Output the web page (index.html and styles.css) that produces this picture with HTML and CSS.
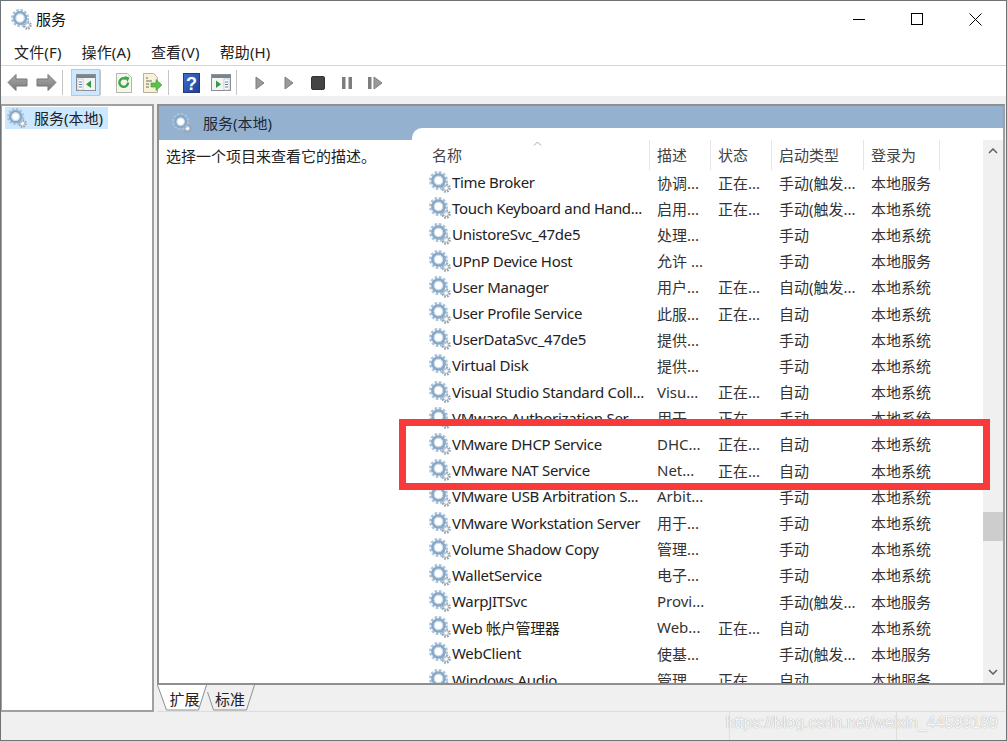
FILE: index.html
```html
<!DOCTYPE html>
<html lang="zh-CN">
<head>
    <meta charset="UTF-8">
    <title>服务</title>
    <link rel="stylesheet" href="styles.css">
</head>
<body>

    <!-- shared icons -->
    <svg class="defs" width="0" height="0">
        <defs>
            <linearGradient id="help-fill" x1="0" y1="0" x2="1" y2="1">
                <stop offset="0" stop-color="#3f6fd0"/>
                <stop offset="1" stop-color="#1f3f92"/>
            </linearGradient>
            <linearGradient id="arrow-fill" x1="0" y1="0" x2="0" y2="1">
                <stop offset="0" stop-color="#a8a8a8"/>
                <stop offset="1" stop-color="#7c7c7c"/>
            </linearGradient>
            <symbol id="gear" viewBox="0 0 22 22">
                <circle cx="17" cy="17" r="3.6" fill="none" stroke="#98a5b2" stroke-width="2.4" stroke-dasharray="1.7 1.1"/>
                <circle cx="17" cy="17" r="2.4" fill="#fff" stroke="#a6b2bd" stroke-width="1"/>
                <circle cx="9.5" cy="9.5" r="8" fill="none" stroke="#a9c4dc" stroke-width="3" stroke-dasharray="2.6 1.6"/>
                <circle cx="9.5" cy="9.5" r="6" fill="none" stroke="#88a8c6" stroke-width="2.6"/>
                <circle cx="9.5" cy="9.5" r="4.2" fill="#fff" stroke="#c4d8e8" stroke-width="1"/>
            </symbol>
        </defs>
    </svg>

    <div class="window">

        <header class="titlebar">
            <svg class="title-gear"><use href="#gear"/></svg>
            <span class="title-text">服务</span>
            <div class="caption">
                <svg width="13" height="13" viewBox="0 0 13 13"><path d="M0 6.500h12" stroke="#000" fill="none"/></svg>
                <svg width="13" height="13" viewBox="0 0 13 13"><rect x=".5" y=".5" width="11" height="11" stroke="#000" fill="none"/></svg>
                <svg width="13" height="13" viewBox="0 0 13 13"><path d="M.5 .5l12 12M12.500 .5l-12 12" stroke="#000" fill="none"/></svg>
            </div>
        </header>

        <nav class="menubar">
            <a href="#">文件(F)</a>
            <a href="#">操作(A)</a>
            <a href="#">查看(V)</a>
            <a href="#">帮助(H)</a>
        </nav>

        <div class="toolbar">
            <button class="tool">
                <svg width="21" height="19" viewBox="0 0 21 19"><path d="M1 9.500l8-8V6h11v7H9v4.500z" fill="url(#arrow-fill)" stroke="#777"/></svg>
            </button>
            <button class="tool">
                <svg width="21" height="19" viewBox="0 0 21 19"><path d="M20 9.500l-8-8V6H1v7h11v4.500z" fill="url(#arrow-fill)" stroke="#777"/></svg>
            </button>
            <span class="sep"></span>
            <button class="tool active">
                <svg width="20" height="17" viewBox="0 0 20 17">
                    <rect x=".5" y=".5" width="19" height="16" fill="#f4f4f4" stroke="#8a8f94"/>
                    <rect x="1" y="1" width="18" height="3" fill="#78848f"/>
                    <rect x="2" y="5" width="5" height="11" fill="#fff" stroke="#aab2ba" stroke-width=".6"/>
                    <path d="M3 8h3M3 10.500h3M3 13h3" stroke="#5a86b0"/>
                    <path d="M15 6.500v7.500l-5-3.750z" fill="#2f9e3f"/>
                </svg>
            </button>
            <span class="sep sep-wide"></span>
            <button class="tool">
                <svg width="16" height="20" viewBox="0 0 16 20">
                    <path d="M.5.5h11l4 4v15H.5z" fill="#f5f5ee" stroke="#b5b5a8"/>
                    <path d="M12 9.500a4.300 4.300 0 1 1-2-3.600" fill="none" stroke="#3aa648" stroke-width="2.400"/>
                    <path d="M8.500 3l5 1.500-2 4.500z" fill="#3aa648"/>
                </svg>
            </button>
            <button class="tool">
                <svg width="20" height="20" viewBox="0 0 20 20">
                    <path d="M.5.5h10l4 4v15H.5z" fill="#f7f1d8" stroke="#b9b296"/>
                    <path d="M3 5h2M3 8h6M3 11h3M3 14h3" stroke="#6b6b60"/>
                    <path d="M8 10h5V6.500l6 5.500-6 5.500V14H8z" fill="#5cc04a" stroke="#3c9a33" stroke-width=".6"/>
                </svg>
            </button>
            <span class="sep"></span>
            <button class="tool">
                <svg width="17" height="20" viewBox="0 0 17 20">
                    <rect x=".5" y=".5" width="16" height="19" fill="url(#help-fill)" stroke="#1d3a82"/>
                    <text x="8.500" y="16.500" class="help-mark">?</text>
                </svg>
            </button>
            <button class="tool">
                <svg width="20" height="17" viewBox="0 0 20 17">
                    <rect x=".5" y=".5" width="19" height="16" fill="#f4f4f4" stroke="#8a8f94"/>
                    <rect x="1" y="1" width="18" height="3" fill="#78848f"/>
                    <rect x="13" y="5" width="5" height="11" fill="#fff" stroke="#aab2ba" stroke-width=".6"/>
                    <path d="M14 8h3M14 10.500h3M14 13h3" stroke="#5a86b0"/>
                    <path d="M5 6.500v7.500l5-3.750z" fill="#2f9e3f"/>
                </svg>
            </button>
            <span class="sep"></span>
            <button class="tool">
                <svg width="10" height="14" viewBox="0 0 10 14"><path d="M1 1l8 6-8 6z" fill="#9a9a9a" stroke="#7d7d7d"/></svg>
            </button>
            <button class="tool">
                <svg width="10" height="14" viewBox="0 0 10 14"><path d="M1 1l8 6-8 6z" fill="#9a9a9a" stroke="#7d7d7d"/></svg>
            </button>
            <button class="tool">
                <svg width="14" height="14" viewBox="0 0 14 14"><rect x=".5" y=".5" width="13" height="13" rx="1.500" fill="#444" stroke="#333"/></svg>
            </button>
            <button class="tool">
                <svg width="10" height="14" viewBox="0 0 10 14"><path d="M0 1h3.500v12H0zM6.500 1H10v12H6.500z" fill="#7d7d7d"/></svg>
            </button>
            <button class="tool">
                <svg width="15" height="14" viewBox="0 0 15 14"><path d="M0 1h3.500v12H0z" fill="#7d7d7d"/><path d="M6 1l8 6-8 6z" fill="#9a9a9a" stroke="#7d7d7d"/></svg>
            </button>
        </div>

        <div class="band"></div>

        <main class="main">

            <aside class="tree">
                <div class="tree-item">
                    <svg class="tree-gear"><use href="#gear"/></svg>
                    <span>服务(本地)</span>
                </div>
            </aside>

            <div class="content">
                <section class="pane">
                    <div class="desc">
                        <div class="pane-title">
                            <svg class="tree-gear"><use href="#gear"/></svg>
                            <span>服务(本地)</span>
                        </div>
                        <p class="desc-text">选择一个项目来查看它的描述。</p>
                    </div>

                    <div class="list">
                        <div class="table">
                            <div class="row head">
                                <div class="cell name-head">名称</div>
                                <div class="cell">描述</div>
                                <div class="cell">状态</div>
                                <div class="cell">启动类型</div>
                                <div class="cell">登录为</div>
                            </div>
                            <svg class="sort-caret" width="9" height="5" viewBox="0 0 9 5"><path d="M1 4.500l3.500-3.500 3.500 3.500" fill="none" stroke="#a8a8a8"/></svg>
                            <div class="rows">
                                <div class="row"><div class="cell name"><svg class="gear"><use href="#gear"/></svg>Time Broker</div><div class="cell">协调...</div><div class="cell">正在...</div><div class="cell">手动(触发...</div><div class="cell">本地服务</div></div>
                                <div class="row"><div class="cell name"><svg class="gear"><use href="#gear"/></svg>Touch Keyboard and Hand...</div><div class="cell">启用...</div><div class="cell">正在...</div><div class="cell">手动(触发...</div><div class="cell">本地系统</div></div>
                                <div class="row"><div class="cell name"><svg class="gear"><use href="#gear"/></svg>UnistoreSvc_47de5</div><div class="cell">处理...</div><div class="cell"></div><div class="cell">手动</div><div class="cell">本地系统</div></div>
                                <div class="row"><div class="cell name"><svg class="gear"><use href="#gear"/></svg>UPnP Device Host</div><div class="cell">允许 ...</div><div class="cell"></div><div class="cell">手动</div><div class="cell">本地服务</div></div>
                                <div class="row"><div class="cell name"><svg class="gear"><use href="#gear"/></svg>User Manager</div><div class="cell">用户...</div><div class="cell">正在...</div><div class="cell">自动(触发...</div><div class="cell">本地系统</div></div>
                                <div class="row"><div class="cell name"><svg class="gear"><use href="#gear"/></svg>User Profile Service</div><div class="cell">此服...</div><div class="cell">正在...</div><div class="cell">自动</div><div class="cell">本地系统</div></div>
                                <div class="row"><div class="cell name"><svg class="gear"><use href="#gear"/></svg>UserDataSvc_47de5</div><div class="cell">提供...</div><div class="cell"></div><div class="cell">手动</div><div class="cell">本地系统</div></div>
                                <div class="row"><div class="cell name"><svg class="gear"><use href="#gear"/></svg>Virtual Disk</div><div class="cell">提供...</div><div class="cell"></div><div class="cell">手动</div><div class="cell">本地系统</div></div>
                                <div class="row"><div class="cell name"><svg class="gear"><use href="#gear"/></svg>Visual Studio Standard Coll...</div><div class="cell">Visu...</div><div class="cell">正在...</div><div class="cell">自动</div><div class="cell">本地系统</div></div>
                                <div class="row"><div class="cell name"><svg class="gear"><use href="#gear"/></svg>VMware Authorization Ser...</div><div class="cell">用于...</div><div class="cell">正在...</div><div class="cell">手动</div><div class="cell">本地系统</div></div>
                                <div class="row"><div class="cell name"><svg class="gear"><use href="#gear"/></svg>VMware DHCP Service</div><div class="cell">DHC...</div><div class="cell">正在...</div><div class="cell">自动</div><div class="cell">本地系统</div></div>
                                <div class="row"><div class="cell name"><svg class="gear"><use href="#gear"/></svg>VMware NAT Service</div><div class="cell">Net...</div><div class="cell">正在...</div><div class="cell">自动</div><div class="cell">本地系统</div></div>
                                <div class="row"><div class="cell name"><svg class="gear"><use href="#gear"/></svg>VMware USB Arbitration S...</div><div class="cell">Arbit...</div><div class="cell"></div><div class="cell">手动</div><div class="cell">本地系统</div></div>
                                <div class="row"><div class="cell name"><svg class="gear"><use href="#gear"/></svg>VMware Workstation Server</div><div class="cell">用于...</div><div class="cell"></div><div class="cell">手动</div><div class="cell">本地系统</div></div>
                                <div class="row"><div class="cell name"><svg class="gear"><use href="#gear"/></svg>Volume Shadow Copy</div><div class="cell">管理...</div><div class="cell"></div><div class="cell">手动</div><div class="cell">本地系统</div></div>
                                <div class="row"><div class="cell name"><svg class="gear"><use href="#gear"/></svg>WalletService</div><div class="cell">电子...</div><div class="cell"></div><div class="cell">手动</div><div class="cell">本地系统</div></div>
                                <div class="row"><div class="cell name"><svg class="gear"><use href="#gear"/></svg>WarpJITSvc</div><div class="cell">Provi...</div><div class="cell"></div><div class="cell">手动(触发...</div><div class="cell">本地服务</div></div>
                                <div class="row"><div class="cell name"><svg class="gear"><use href="#gear"/></svg>Web 帐户管理器</div><div class="cell">Web...</div><div class="cell">正在...</div><div class="cell">自动</div><div class="cell">本地系统</div></div>
                                <div class="row"><div class="cell name"><svg class="gear"><use href="#gear"/></svg>WebClient</div><div class="cell">使基...</div><div class="cell"></div><div class="cell">手动(触发...</div><div class="cell">本地服务</div></div>
                                <div class="row"><div class="cell name"><svg class="gear"><use href="#gear"/></svg>Windows Audio</div><div class="cell">管理...</div><div class="cell">正在...</div><div class="cell">自动</div><div class="cell">本地服务</div></div>
                            </div>
                        </div>

                        <div class="scrollbar">
                            <svg class="arrow" width="10" height="6" viewBox="0 0 10 6"><path d="M1 5l4-4 4 4" fill="none" stroke="#606060" stroke-width="1.500"/></svg>
                            <div class="track"><div class="thumb"></div></div>
                            <svg class="arrow" width="10" height="6" viewBox="0 0 10 6"><path d="M1 1l4 4 4-4" fill="none" stroke="#606060" stroke-width="1.500"/></svg>
                        </div>
                    </div>

                    <div class="highlight"></div>
                </section>

                <div class="tabs">
                    <div class="tab tab-on">
                        <svg class="tab-shape" width="51" height="26" viewBox="0 0 51 26"><path d="M.5 0l9 25h32l8-25" fill="#fff" stroke="#8f8f8f"/></svg>
                        <span>扩展</span>
                    </div>
                    <div class="tab">
                        <svg class="tab-shape" width="49" height="26" viewBox="0 0 49 26"><path d="M.5 7l6 18h33l8-25" fill="#f0f0f0" stroke="#8f8f8f"/></svg>
                        <span>标准</span>
                    </div>
                </div>
            </div>

        </main>

        <footer class="statusbar">
            <span class="status-cell"></span>
            <span class="status-cell status-mid"></span>
            <span class="status-cell status-end"></span>
            <span class="watermark">https://blog.csdn.net/weixin_44599189</span>
        </footer>

    </div>

</body>
</html>
```

FILE: styles.css
```css
* {
    box-sizing: border-box;
}
body {
    margin: 0;
    font-family: "Noto Sans", "Noto Sans CJK SC", sans-serif;
    font-size: 15px;
    color: #222;
    background-color: #fff;
}
.defs {
    position: absolute;
}
.window {
    width: 1007px;
    height: 741px;
    border: 1px solid #6f7376;
    display: flex;
    flex-direction: column;
    overflow: hidden;
}

/* title bar */
.titlebar {
    height: 37px;
    display: flex;
    align-items: center;
    padding-left: 10px;
    flex: none;
}
.title-gear {
    width: 21px;
    height: 21px;
    margin-right: 4px;
}
.title-text {
    color: #111;
    margin-bottom: 2px;
}
.caption {
    margin-left: auto;
    display: flex;
    gap: 45px;
    padding-right: 24px;
}

/* menu */
.menubar {
    height: 28px;
    display: flex;
    align-items: center;
    padding-left: 13px;
    gap: 20px;
    flex: none;
    letter-spacing: .15px;
    border-bottom: 1px solid #d4d4d4;
}
.menubar a {
    color: #222;
    text-decoration: none;
}

/* toolbar */
.toolbar {
    height: 30px;
    display: flex;
    align-items: center;
    padding: 3px 0 0 2px;
    flex: none;
}
.tool {
    width: 29px;
    height: 27px;
    padding: 0;
    border: 1px solid transparent;
    background: none;
    display: flex;
    align-items: center;
    justify-content: center;
}
.tool.active {
    background-color: #cce8ff;
    border-color: #99d1ff;
}
.sep {
    width: 1px;
    height: 25px;
    background-color: #c4c4c4;
    margin: 0 8px 0 1px;
}
.sep-wide {
    margin-left: 0;
}
.help-mark {
    fill: #fff;
    font-family: "Liberation Sans", sans-serif;
    font-size: 18px;
    font-weight: bold;
    text-anchor: middle;
}
.band {
    height: 8px;
    background-color: #f0f0f0;
    flex: none;
}

/* panes */
.main {
    flex: 1;
    min-height: 0;
    display: flex;
    gap: 3px;
    background-color: #f0f0f0;
}
.tree {
    width: 153px;
    background-color: #fff;
    border: 2px solid #a0a0a0;
    border-left-width: 1px;
    padding: 1px 3px;
}
.tree-item {
    width: 103px;
    height: 22px;
    display: flex;
    align-items: center;
    gap: 7px;
    padding-left: 2px;
    background-color: #cce8ff;
    white-space: nowrap;
}
.tree-item span {
    margin-bottom: 2px;
}
.tree-gear {
    width: 20px;
    height: 20px;
    flex: none;
}
.content {
    flex: 1;
    min-width: 0;
    display: flex;
    flex-direction: column;
    padding-right: 1px;
}
.pane {
    height: 581px;
    flex: none;
    position: relative;
    display: flex;
    border: 2px solid #8f8f8f;
    border-right-color: #a0a0a0;
    background-color: #95b1d0;
}
.desc {
    width: 253px;
    display: flex;
    flex-direction: column;
    flex: none;
}
.pane-title {
    height: 34px;
    display: flex;
    align-items: center;
    gap: 11px;
    padding: 0 0 0 13px;
    color: #1c2a38;
    flex: none;
}
.pane-title span {
    margin-bottom: 1px;
}
.desc-text {
    flex: 1;
    margin: 0;
    padding: 5px 0 0 7px;
    background-color: #fff;
}
.list {
    flex: 1;
    min-width: 0;
    margin-top: 22px;
    display: flex;
    background-color: #fff;
    border-top-left-radius: 10px;
    padding-top: 12px;
}
.table {
    flex: 1;
    min-width: 0;
    position: relative;
    overflow: hidden;
    padding-left: 17px;
    display: flex;
    flex-direction: column;
}
.row {
    display: grid;
    grid-template-columns: 221px 61px 61px 92px 76px;
    height: 26.2px;
    align-items: center;
    white-space: nowrap;
}
.rows {
    flex: 1;
    min-height: 0;
    margin-top: -1px;
}
.cell {
    padding-left: 7px;
    color: #333;
    overflow: hidden;
}
.cell.name {
    display: flex;
    align-items: center;
    padding-left: 0;
    color: #222;
    letter-spacing: -.3px;
}
.gear {
    width: 22px;
    height: 22px;
    margin-right: 1px;
    flex: none;
}
.row.head {
    height: 30px;
    align-items: stretch;
    flex: none;
}
.row.head .cell {
    display: flex;
    align-items: center;
    padding-bottom: 2px;
    color: #444;
    border-right: 1px solid #e5e5e5;
}
.row.head .name-head {
    padding-left: 3px;
}
.sort-caret {
    position: absolute;
    left: 121px;
    top: 1px;
}

/* scroll bar */
.scrollbar {
    width: 20px;
    flex: none;
    display: flex;
    flex-direction: column;
    align-items: center;
    background-color: #f0f0f0;
}
.arrow {
    margin: 8px 0;
    flex: none;
}
.track {
    flex: 1;
    width: 100%;
}
.thumb {
    height: 29px;
    margin-top: 350px;
    background-color: #cdcdcd;
}

/* red frame around the two VMware rows */
.highlight {
    position: absolute;
    left: 240px;
    top: 313px;
    width: 591px;
    height: 71px;
    border: 7px solid #f93a3a;
}

/* tabs */
.tabs {
    flex: 1;
    display: flex;
    align-items: flex-start;
    border-bottom: 1px solid #dcdcdc;
}
.tab {
    position: relative;
    height: 26px;
    width: 48px;
    display: flex;
    align-items: center;
    justify-content: center;
    padding-right: 2px;
}
.tab span {
    position: relative;
}
.tab-on {
    width: 50px;
    padding: 0 0 0 5px;
}
.tab-shape {
    position: absolute;
    left: 0;
    top: 0;
}

/* status bar */
.statusbar {
    height: 28px;
    flex: none;
    position: relative;
    display: flex;
    background-color: #f0f0f0;
}
.status-cell {
    width: 729px;
    border-right: 1px solid #dedede;
}
.status-mid {
    width: 167px;
}
.status-end {
    width: 60px;
    border-right: 0;
}
.watermark {
    position: absolute;
    right: 8px;
    top: 1px;
    font-family: "Liberation Sans", sans-serif;
    font-size: 16px;
    line-height: 20px;
    color: #f8f8f8;
    text-shadow: 0 0 1px #8e8e8e;
}
```
